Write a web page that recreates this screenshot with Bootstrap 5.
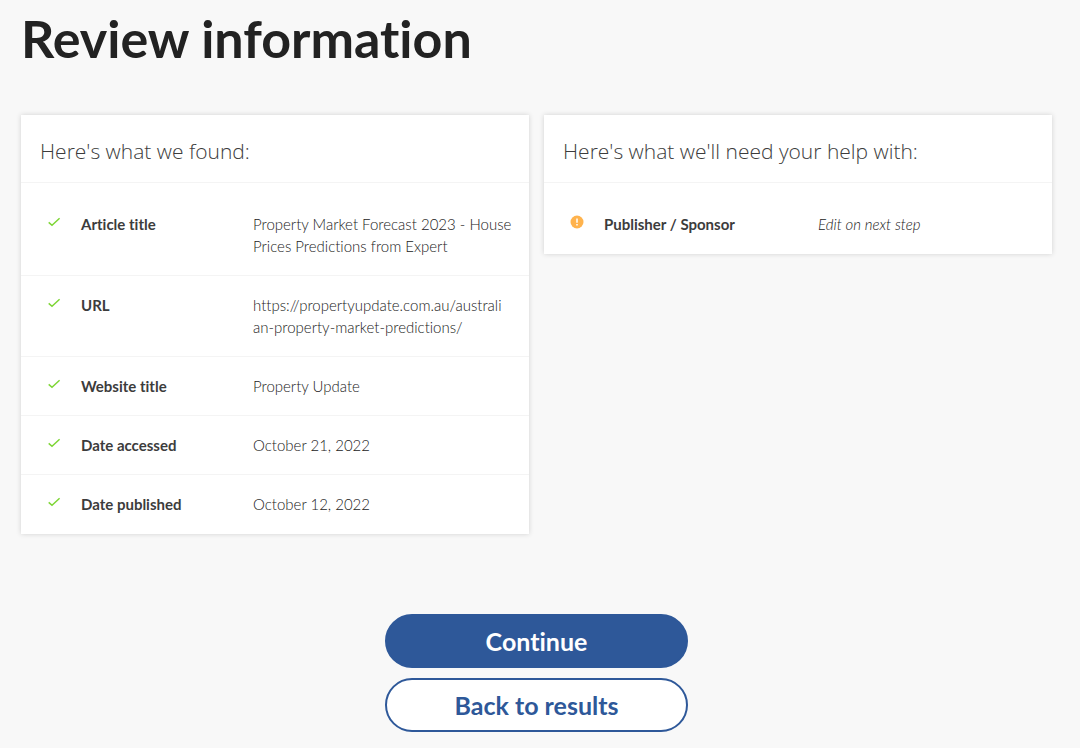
<!DOCTYPE html>
<html lang="en">
<head>
<meta charset="utf-8">
<meta name="viewport" content="width=device-width, initial-scale=1">
<title>Review information</title>
<link href="https://cdn.jsdelivr.net/npm/bootstrap@5.3.0/dist/css/bootstrap.min.css" rel="stylesheet">
<style>
  body { background: #f8f8f8; color: #3c3c3c; font-family: Lato, "Open Sans", sans-serif; font-size: 15px; line-height: 22px; }
  body, button { font-variant-ligatures: none; }
  .page { padding: 8px 28px 16px 21px; }
  .page-title { font-size: 52px; line-height: 60px; font-weight: 700; color: #222; margin-bottom: 47px; }
  .panels { --bs-gutter-x: 15px; --bs-gutter-y: 15px; margin-top: 0; }
  .panels > * { margin-top: 0; margin-bottom: 15px; }
  .panel { border: 0; border-radius: 0; color: inherit; box-shadow: 0 0 5px rgba(0, 0, 0, .16); }
  .panel-title { font-family: "Open Sans", sans-serif; font-weight: 300; font-size: 21px; line-height: 27px; padding: 23px 19px 17px; border-bottom: 1px solid #f4f4f4; }
  .facts { padding-top: 12px; }
  .fact { padding: 18px 14px 18px 19px; border-bottom: 1px solid #f4f4f4; }
  .fact:last-child { border-bottom-color: transparent; }
  .fact-icon { flex: 0 0 41px; padding-left: 7px; line-height: 0; padding-top: 2px; }
  .fact-label { flex: 0 0 172px; font-weight: 700; font-size: 15px; }
  .fact-label-wide { flex-basis: 214px; }
  .fact-value { color: #222; font-weight: 300; font-size: 15px; }
  .actions { margin-top: 65px; gap: 10px; }
  .action { width: 303px; max-width: 100%; --bs-btn-font-size: 25px; --bs-btn-font-weight: 700; --bs-btn-padding-y: 10px; --bs-btn-border-width: 2px; --bs-btn-border-radius: 27px; --bs-btn-border-color: #2e5899; line-height: 30px; }
  .action-main { --bs-btn-bg: #2e5899; --bs-btn-color: #fff; --bs-btn-hover-bg: #244a84; --bs-btn-hover-color: #fff; }
  .action-back { --bs-btn-bg: #fff; --bs-btn-color: #2e5899; --bs-btn-hover-bg: #eef3fa; --bs-btn-hover-color: #2e5899; }
</style>
</head>
<body>
<svg class="d-none" aria-hidden="true">
  <symbol id="check" viewBox="0 0 14 14"><path d="M1.7 7.4 5 10.3 12.6 3.2" fill="none" stroke="#7ed636" stroke-width="1.5"/></symbol>
</svg>
<main class="page container-fluid">
  <h1 class="page-title">Review information</h1>
  <div class="row panels align-items-start">
    <div class="col-12 col-md-6">
      <section class="card panel">
        <h2 class="panel-title mb-0">Here's what we found:</h2>
        <dl class="facts mb-0">
          <div class="fact d-flex"><span class="fact-icon"><svg width="14" height="14"><use href="#check"/></svg></span><dt class="fact-label">Article title</dt><dd class="fact-value mb-0">Property Market Forecast 2023 - House Prices Predictions from Expert</dd></div>
          <div class="fact d-flex"><span class="fact-icon"><svg width="14" height="14"><use href="#check"/></svg></span><dt class="fact-label">URL</dt><dd class="fact-value mb-0">https://propertyupdate.com.au/australi<wbr>an-property-market-predictions/</dd></div>
          <div class="fact d-flex"><span class="fact-icon"><svg width="14" height="14"><use href="#check"/></svg></span><dt class="fact-label">Website title</dt><dd class="fact-value mb-0">Property Update</dd></div>
          <div class="fact d-flex"><span class="fact-icon"><svg width="14" height="14"><use href="#check"/></svg></span><dt class="fact-label">Date accessed</dt><dd class="fact-value mb-0">October 21, 2022</dd></div>
          <div class="fact d-flex"><span class="fact-icon"><svg width="14" height="14"><use href="#check"/></svg></span><dt class="fact-label">Date published</dt><dd class="fact-value mb-0">October 12, 2022</dd></div>
        </dl>
      </section>
    </div>
    <div class="col-12 col-md-6">
      <section class="card panel">
        <h2 class="panel-title mb-0">Here's what we'll need your help with:</h2>
        <dl class="facts mb-0">
          <div class="fact d-flex"><span class="fact-icon"><svg width="14" height="14" viewBox="0 0 14 14"><circle cx="7" cy="7" r="6.5" fill="#ffb34d"/><path d="M7 3.4v4.3M7 9v1.6" stroke="#fff" stroke-width="1.5"/></svg></span><dt class="fact-label fact-label-wide">Publisher / Sponsor</dt><dd class="fact-value fst-italic mb-0">Edit on next step</dd></div>
        </dl>
      </section>
    </div>
  </div>
  <div class="actions d-flex flex-column align-items-center">
    <button type="button" class="btn action action-main">Continue</button>
    <button type="button" class="btn action action-back">Back to results</button>
  </div>
</main>
<script src="https://cdn.jsdelivr.net/npm/bootstrap@5.3.0/dist/js/bootstrap.bundle.min.js"></script>
</body>
</html>
